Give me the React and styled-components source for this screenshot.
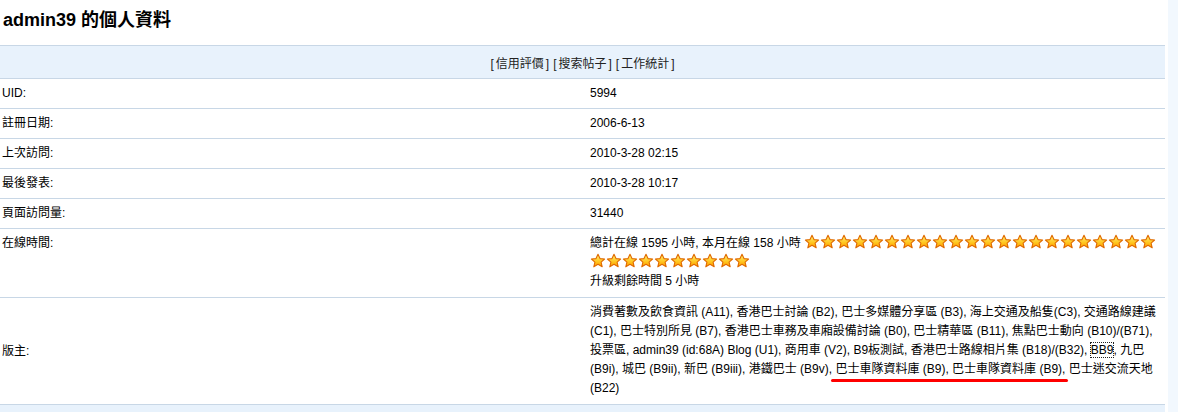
import React from 'react';
import styled, { createGlobalStyle } from 'styled-components';

const GlobalStyle = createGlobalStyle`
  html, body {
    margin: 0;
    padding: 0;
    background: #ffffff;
  }
  body {
    font-family: "Liberation Sans", "Noto Sans CJK TC", Arial, sans-serif;
    font-size: 12px;
    color: #000;
  }
`;

const Page = styled.div`
  display: flex;
  height: 412px;
  overflow: hidden;
`;

const Main = styled.div`
  width: 1165px;
  flex: none;
  display: flex;
  flex-direction: column;
`;

const SideStrip = styled.div`
  flex: 1;
  margin-left: 3px;
  background: #f2f8fe;
`;

const Heading = styled.h1`
  margin: 0;
  height: 45px;
  padding: 9px 0 0 3px;
  box-sizing: border-box;
  font-size: 18px;
  line-height: 22px;
  font-weight: bold;
  font-family: "Liberation Sans", "Noto Sans CJK TC", Arial, sans-serif;
`;

const Table = styled.div`
  display: flex;
  flex-direction: column;
  flex: 1;
  border-top: 1px solid #c8d7e6;
`;

const NavRow = styled.div`
  height: 32px;
  display: flex;
  align-items: center;
  justify-content: center;
  gap: 4px;
  background: #e8f2fc;
  border-bottom: 1px solid #c8d7e6;
  color: #222;
`;

const NavLink = styled.span`
  & b {
    font-weight: normal;
    margin: 0 2px;
  }
`;

const Row = styled.div`
  display: grid;
  grid-template-columns: 587px 1fr;
  border-bottom: 1px solid #c8d7e6;
`;

const Label = styled.div`
  padding: 5px 2px;
  line-height: 19px;
  align-self: ${(p) => (p.$middle ? 'center' : 'start')};
`;

const Value = styled.div`
  padding: 5px 6px ${(p) => (p.$tall ? '6px' : '5px')} 3px;
  line-height: 19px;
`;

const StarIcon = styled.svg`
  width: 16px;
  height: 16px;
  vertical-align: -3px;
`;

const Focused = styled.span`
  outline: 1px dotted #222;
`;

const Marked = styled.span`
  position: relative;
  &::after {
    content: '';
    position: absolute;
    left: -4px;
    right: -6px;
    bottom: -6px;
    height: 3px;
    border-radius: 2px;
    background: #ff0000;
  }
`;

const Footer = styled.div`
  flex: 1;
  background: #e8f2fc;
`;

function Star() {
  return (
    <StarIcon viewBox="0 0 16 16">
      <defs>
        <linearGradient id="sg" x1="0" y1="0" x2="0" y2="1">
          <stop offset="0" stopColor="#fff27a" />
          <stop offset="0.6" stopColor="#ffc51e" />
          <stop offset="1" stopColor="#ff9c00" />
        </linearGradient>
      </defs>
      <polygon
        points="8,1.2 10,5.6 14.6,6 11.1,9.1 12.2,13.8 8,11.3 3.8,13.8 4.9,9.1 1.4,6 6,5.6"
        fill="url(#sg)"
        stroke="#e06a00"
        strokeWidth="1.1"
        strokeLinejoin="round"
      />
    </StarIcon>
  );
}

const rows = [
  ['UID:', '5994'],
  ['註冊日期:', '2006-6-13'],
  ['上次訪問:', '2010-3-28 02:15'],
  ['最後發表:', '2010-3-28 10:17'],
  ['頁面訪問量:', '31440'],
];

export default function App() {
  const stars = Array.from({ length: 32 });
  return (
    <Page>
      <GlobalStyle />
      <Main>
        <Heading>admin39 的個人資料</Heading>
        <Table>
          <NavRow>
            <NavLink>[<b>信用評價</b>]</NavLink>
            <NavLink>[<b>搜索帖子</b>]</NavLink>
            <NavLink>[<b>工作統計</b>]</NavLink>
          </NavRow>
          {rows.map(([k, v]) => (
            <Row key={k}>
              <Label>{k}</Label>
              <Value>{v}</Value>
            </Row>
          ))}
          <Row>
            <Label>在線時間:</Label>
            <Value $tall>
              總計在線 1595 小時, 本月在線 158 小時{' '}
              {stars.map((_, i) => (
                <Star key={i} />
              ))}
              <br />
              升級剩餘時間 5 小時
            </Value>
          </Row>
          <Row>
            <Label $middle>版主:</Label>
            <Value $tall>
              消費著數及飲食資訊 (A11), 香港巴士討論 (B2), 巴士多媒體分享區 (B3), 海上交通及船隻(C3), 交通路線建議
              (C1), 巴士特別所見 (B7), 香港巴士車務及車廂設備討論 (B0), 巴士精華區 (B11), 焦點巴士動向 (B10)/(B71),
              投票區, admin39 (id:68A) Blog (U1), 商用車 (V2), B9板測試, 香港巴士路線相片集 (B18)/(B32),{' '}
              <Focused>BB9</Focused>, 九巴 (B9i), 城巴 (B9ii), 新巴 (B9iii), 港鐵巴士 (B9v),{' '}
              <Marked>巴士車隊資料庫 (B9), 巴士車隊資料庫 (B9)</Marked>, 巴士迷交流天地 (B22)
            </Value>
          </Row>
          <Footer />
        </Table>
      </Main>
      <SideStrip />
    </Page>
  );
}
